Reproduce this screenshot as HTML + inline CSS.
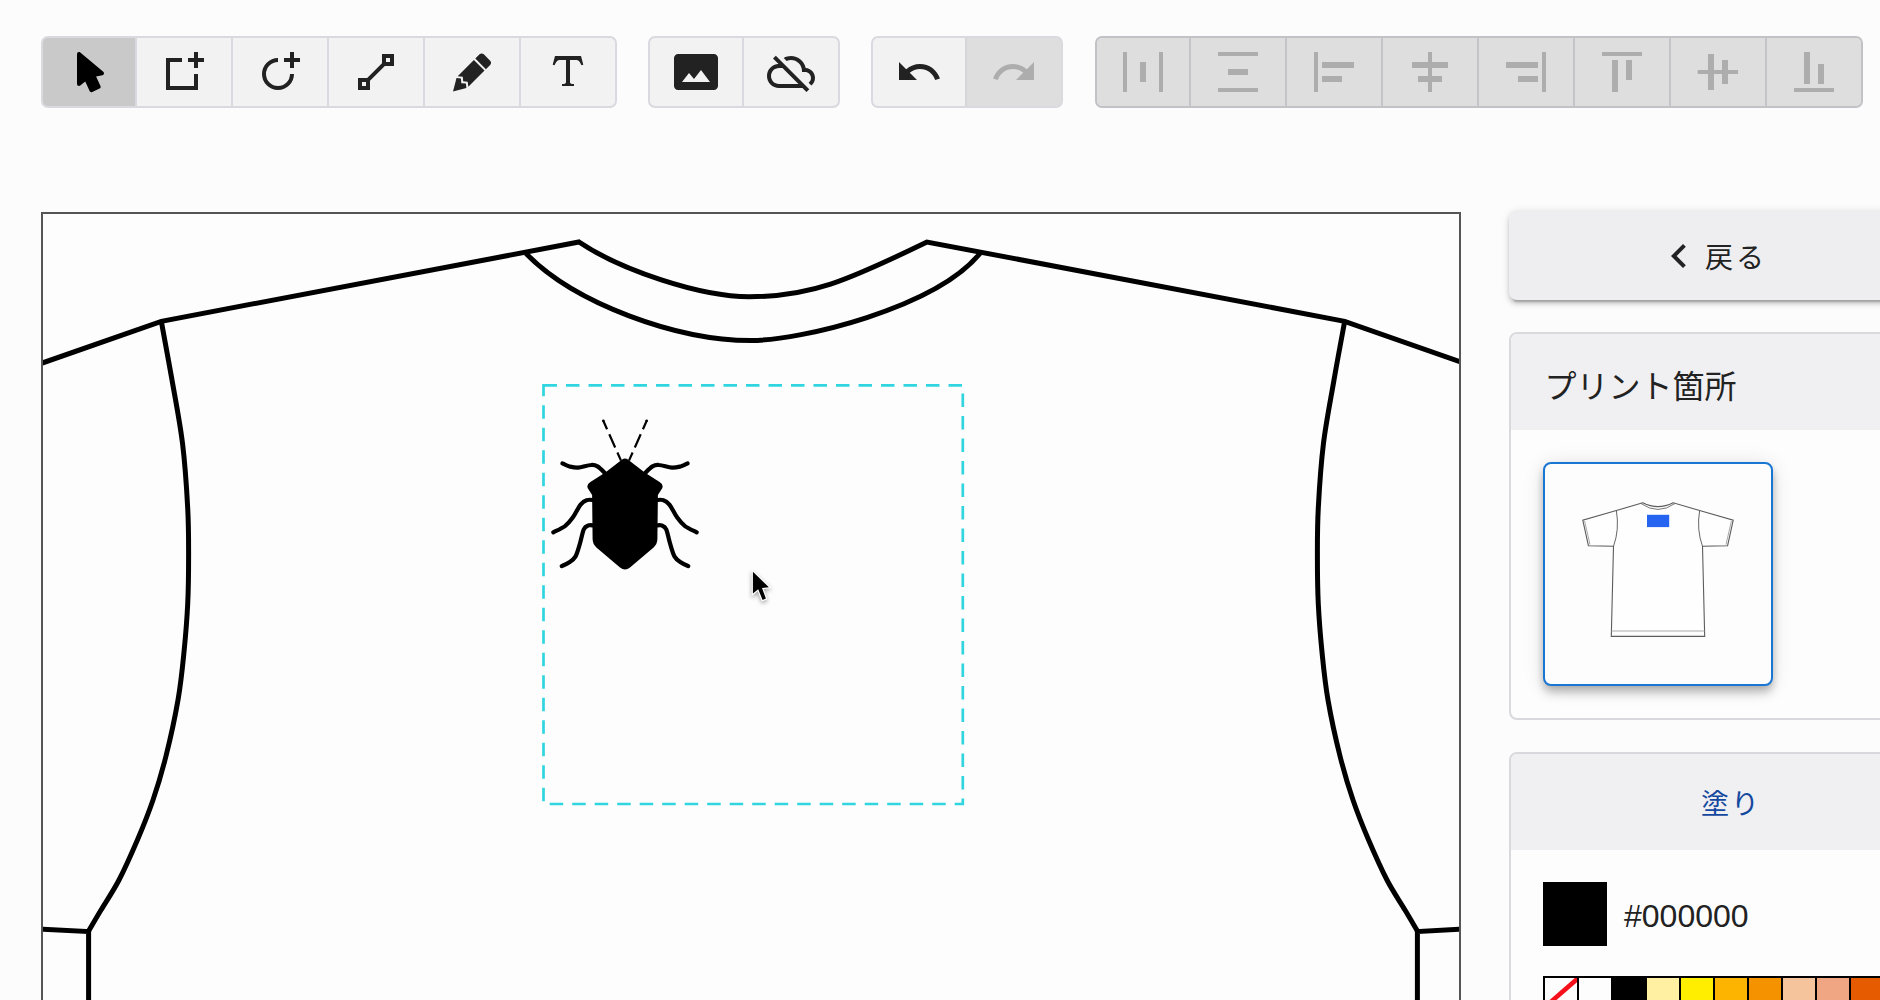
<!DOCTYPE html>
<html lang="ja">
<head>
<meta charset="utf-8">
<title>Editor</title>
<style>
*{box-sizing:border-box;margin:0;padding:0}
html,body{width:1880px;height:1000px;overflow:hidden;background:#fcfcfd;font-family:"Liberation Sans","Noto Sans CJK JP",sans-serif;color:#222}
.abs{position:absolute}
.grp{position:absolute;top:36px;height:72px;display:flex;border-radius:7px;overflow:hidden;border:2px solid #d9d9df;background:#d9d9df}
.btn{width:96px;height:68px;background:#f2f2f2;border-left:2px solid #d9d9df;position:relative;flex:0 0 auto}
.btn:first-child{border-left:none;width:92px}
.btn.act{background:#c9c9c9}
.btn.dis{background:#dedede;border-left-color:#c4c4c8}
.grp.dis{border-color:#c2c2c6;background:#dedede}
.btn svg{position:absolute;left:50%;top:50%;width:48px;height:48px;margin:-24px 0 0 -24px;fill:#222}
.btn.act svg{fill:#000}
.btn.dis svg{fill:#adadad}
#canvas{position:absolute;left:41px;top:212px;width:1420px;height:800px;border:2px solid #555;background:#fdfdfd;overflow:hidden}
.card{position:absolute;left:1509px;width:420px;border:2px solid #d9d9dd;border-radius:8px;background:#fdfdfd;overflow:hidden}
.card .hd{background:#f0f0f2;height:96px;position:relative}
#g3 .btn.dis{border-left-color:#d6d6da}
</style>
</head>
<body>
<!-- toolbar -->
<div class="grp" id="g1" style="left:41px;width:576px"><div class="btn act"><svg viewBox="0 0 24 24"><path d="M13.64,21.97C13.14,22.21 12.54,22 12.31,21.5L10.13,16.76L7.62,18.78C7.45,18.92 7.24,19 7,19A1,1 0 0,1 6,18V3A1,1 0 0,1 7,2C7.24,2 7.47,2.09 7.64,2.23L7.65,2.22L19.14,11.86C19.57,12.22 19.62,12.85 19.27,13.27C19.12,13.45 18.91,13.57 18.7,13.61L15.54,14.23L17.74,18.96C18,19.46 17.76,20.05 17.26,20.28L13.64,21.97Z"/></svg></div><div class="btn "><svg viewBox="0 0 24 24"><path d="M19,5H22V7H19V10H17V7H14V5H17V2H19V5M17,19V13H19V21H3V5H11V7H5V19H17Z"/></svg></div><div class="btn "><svg viewBox="0 0 24 24"><path d="M11,19A6,6 0 0,0 17,13H19A8,8 0 0,1 11,21A8,8 0 0,1 3,13A8,8 0 0,1 11,5V7A6,6 0 0,0 5,13A6,6 0 0,0 11,19M19,5H22V7H19V10H17V7H14V5H17V2H19V5Z"/></svg></div><div class="btn "><svg viewBox="0 0 24 24"><path d="M15,3V7.59L7.59,15H3V21H9V16.42L16.42,9H21V3M17,5H19V7H17M5,17H7V19H5"/></svg></div><div class="btn "><svg viewBox="0 0 24 24"><path d="M16.84,2.73C16.45,2.73 16.07,2.88 15.77,3.17L13.65,5.29L18.95,10.6L21.07,8.5C21.67,7.89 21.67,6.94 21.07,6.36L17.9,3.17C17.6,2.88 17.22,2.73 16.84,2.73M12.94,6L4.84,14.11L7.4,14.39L7.58,16.68L9.86,16.85L10.15,19.41L18.25,11.3M4.25,15.04L2.5,21.73L9.2,19.94L8.96,17.78L6.65,17.61L6.47,15.29"/></svg></div><div class="btn "><svg viewBox="0 0 24 24"><path d="M18.5,4L19.66,8.35L18.7,8.61C18.25,7.74 17.79,6.87 17.26,6.43C16.73,6 16.11,6 15.5,6H13V16.5C13,17 13,17.5 13.33,17.75C13.67,18 14.33,18 15,18V19H9V18C9.67,18 10.33,18 10.67,17.75C11,17.5 11,17 11,16.5V6H8.5C7.89,6 7.27,6 6.74,6.43C6.21,6.87 5.75,7.74 5.3,8.61L4.34,8.35L5.5,4H18.5Z"/></svg></div></div>
<div class="grp" id="g2" style="left:648px;width:192px"><div class="btn "><svg viewBox="0 0 24 24"><path d="M21 3H3C2 3 1 4 1 5v14c0 1.1.9 2 2 2h18c1 0 2-1 2-2V5c0-1-1-2-2-2zM5 17l3.5-4.5 2.5 3.01L14.5 11l4.5 6H5z"/></svg></div><div class="btn "><svg viewBox="0 0 24 24"><path d="M24 15c0-2.64-2.05-4.78-4.65-4.96C18.67 6.59 15.64 4 12 4c-1.33 0-2.57.36-3.65.97l1.49 1.49C10.51 6.17 11.23 6 12 6c3.04 0 5.5 2.46 5.5 5.5v.5H19c1.66 0 3 1.34 3 3 0 .99-.48 1.85-1.21 2.4l1.41 1.41c1.09-.92 1.8-2.27 1.8-3.81zM4.41 3.86L3 5.27l2.77 2.77h-.42C2.34 8.36 0 10.91 0 14c0 3.310 2.69 6 6 6h11.73l2 2 1.41-1.41L4.41 3.86zM6 18c-2.21 0-4-1.79-4-4s1.79-4 4-4h1.73l8 8H6z"/></svg></div></div>
<div class="grp" id="g3" style="left:871px;width:192px"><div class="btn "><svg viewBox="0 0 24 24"><path d="M12.5 8c-2.65 0-5.05.99-6.9 2.6L2 7v9h9l-3.62-3.62c1.39-1.16 3.16-1.88 5.12-1.88 3.54 0 6.55 2.31 7.6 5.5l2.37-.78C21.08 11.03 17.15 8 12.5 8z"/></svg></div><div class="btn dis"><svg viewBox="0 0 24 24"><path d="M18.4 10.6C16.55 8.99 14.15 8 11.5 8c-4.65 0-8.58 3.03-9.96 7.22L3.9 16c1.05-3.19 4.05-5.5 7.6-5.5 1.95 0 3.73.72 5.12 1.88L13 16h9V7l-3.6 3.6z"/></svg></div></div>
<div class="grp dis" id="g4" style="left:1095px;width:768px"><div class="btn dis"><svg viewBox="0 0 24 24"><path d="M4 22H2V2h2v20zM22 2h-2v20h2V2zm-8.5 5h-3v10h3V7z"/></svg></div><div class="btn dis"><svg viewBox="0 0 24 24"><path d="M22 2v2H2V2h20zM7 10.5v3h10v-3H7zM2 20v2h20v-2H2z"/></svg></div><div class="btn dis"><svg viewBox="0 0 24 24"><path d="M4 22H2V2h2v20zM22 7H6v3h16V7zm-6 7H6v3h10v-3z"/></svg></div><div class="btn dis"><svg viewBox="0 0 24 24"><path d="M11 2h2v5h8v3h-8v4h5v3h-5v5h-2v-5H6v-3h5v-4H3V7h8V2z"/></svg></div><div class="btn dis"><svg viewBox="0 0 24 24"><path d="M20 2h2v20h-2V2zM2 10h16V7H2v3zm6 7h10v-3H8v3z"/></svg></div><div class="btn dis"><svg viewBox="0 0 24 24"><path d="M22 2v2H2V2h20zM7 22h3V6H7v16zm7-6h3V6h-3v10z"/></svg></div><div class="btn dis"><svg viewBox="0 0 24 24"><path d="M22 11h-5V6h-3v5h-4V3H7v8H1.84v2H7v8h3v-8h4v5h3v-5h5z"/></svg></div><div class="btn dis"><svg viewBox="0 0 24 24"><path d="M22 22H2v-2h20v2zM10 2H7v16h3V2zm7 6h-3v10h3V8z"/></svg></div></div>

<!-- canvas -->
<div id="canvas">
<svg id="shirt" class="abs" style="left:-2px;top:-2px" width="1420" height="800" viewBox="41 212 1420 800" fill="none" stroke="#000" stroke-width="5" stroke-linejoin="miter" stroke-linecap="butt">
  <!-- shoulders / sleeves top -->
    <!-- collar outer -->
  <path d="M40 363.8L161.3 321.3L579 242C620.8 270.1 700 296.7 749.5 296.7C810 296.7 846 281.4 927 242L1344.7 321.3L1466 363.8"/>
  <!-- collar inner -->
  <path d="M526 253.5C574.8 303.7 677 340.5 751 340.5C800 340.5 934.8 308.3 980 253.5"/>
  <!-- armholes -->
  <path d="M161.3 321.3C163.1 331.1 168.4 359.6 172.0 380.0C175.6 400.4 180.0 422.7 182.6 444.0C185.2 465.3 186.7 489.3 187.7 508.0C188.7 526.7 188.6 540.0 188.6 556.0C188.6 572.0 188.5 588.0 187.7 604.0C186.9 620.0 185.6 636.0 184.0 652.0C182.4 668.0 181.0 682.7 178.0 700.0C175.0 717.3 170.2 739.3 166.0 756.0C161.8 772.7 157.8 786.0 153.0 800.0C148.2 814.0 143.1 826.7 137.4 840.0C131.7 853.3 125.1 868.3 119.0 880.0C112.9 891.7 106.1 901.5 101.0 910.0C95.9 918.5 90.7 927.5 88.6 931.0"/>
  <path d="M1344.7 321.3C1342.9 331.1 1337.5 359.6 1334.0 380.0C1330.5 400.4 1326.0 422.7 1323.4 444.0C1320.8 465.3 1319.3 489.3 1318.3 508.0C1317.3 526.7 1317.4 540.0 1317.4 556.0C1317.4 572.0 1317.5 588.0 1318.3 604.0C1319.1 620.0 1320.4 636.0 1322.0 652.0C1323.6 668.0 1325.0 682.7 1328.0 700.0C1331.0 717.3 1335.8 739.3 1340.0 756.0C1344.2 772.7 1348.2 786.0 1353.0 800.0C1357.8 814.0 1362.9 826.7 1368.6 840.0C1374.3 853.3 1380.9 868.3 1387.0 880.0C1393.1 891.7 1399.9 901.5 1405.0 910.0C1410.1 918.5 1415.3 927.5 1417.4 931.0"/>
  <!-- sleeve hems + side seams -->
  <path d="M40 929L88.6 931.5V1020"/>
  <path d="M1466 929L1417.4 931.5V1020"/>
  <!-- print area -->
  <rect x="543.5" y="385.4" width="419.3" height="418.6" stroke="#30d5e0" stroke-width="2.7" stroke-dasharray="13.5 9"/>
  <!-- bug -->
  <g stroke="#000" stroke-width="4.2" stroke-linecap="round" fill="none">
    <path d="M645.4 472.8C646.5 471.7 650.2 467.6 652.5 466.3C654.8 465.0 655.8 464.7 659.0 465.0C662.3 465.2 668.3 467.3 672.0 467.6C675.7 467.8 678.5 466.9 681.1 466.3C683.7 465.6 686.5 463.9 687.6 463.4"/><path d="M604.6 472.8C603.5 471.7 599.8 467.6 597.5 466.3C595.2 465.0 594.2 464.7 591.0 465.0C587.7 465.2 581.7 467.3 578.0 467.6C574.3 467.8 571.5 466.9 568.9 466.3C566.3 465.6 563.5 463.9 562.4 463.4"/>
    <path d="M656.4 500.1C657.5 500.1 660.7 499.3 662.9 500.1C665.1 500.8 667.0 501.7 669.4 504.6C671.8 507.5 674.6 514.0 677.2 517.6C679.8 521.2 681.8 523.6 685.0 526.1C688.3 528.5 694.8 531.3 696.7 532.3"/><path d="M593.6 500.1C592.5 500.1 589.3 499.3 587.1 500.1C584.9 500.8 583.0 501.7 580.6 504.6C578.2 507.5 575.4 514.0 572.8 517.6C570.2 521.2 568.2 523.6 565.0 526.1C561.7 528.5 555.2 531.3 553.3 532.3"/>
    <path d="M656.4 525.4C657.3 525.4 660.0 524.8 661.6 525.4C663.2 526.1 664.8 526.3 666.2 529.3C667.6 532.4 668.7 539.1 670.1 543.6C671.5 548.2 672.8 553.5 674.6 556.6C676.5 559.8 678.8 560.9 681.1 562.5C683.4 564.1 687.1 565.5 688.3 566.1"/><path d="M593.6 525.4C592.7 525.4 590.0 524.8 588.4 525.4C586.8 526.1 585.2 526.3 583.8 529.3C582.4 532.4 581.3 539.1 579.9 543.6C578.5 548.2 577.2 553.5 575.4 556.6C573.5 559.8 571.2 560.9 568.9 562.5C566.6 564.1 562.9 565.5 561.7 566.1"/>
  </g>
  <g stroke="#000" stroke-width="2.2" stroke-dasharray="14.5 5.5" stroke-dashoffset="5" stroke-linecap="butt">
    <path d="M603.2 420.5L621 460.6"/>
    <path d="M646.8 420.5L629 460.6"/>
  </g>
  <circle cx="603.3" cy="420.8" r="1.3" fill="#000" stroke="none"/>
  <circle cx="646.7" cy="420.8" r="1.3" fill="#000" stroke="none"/>
  <path fill="#000" stroke="none" d="M625 458.4Q626.6 458.4 628.2 459.8L644.7 472.6L659.6 482Q663.8 484.6 662.2 488.2L657.9 495L657.4 539Q657.4 544 653.6 547.4L630 567.6Q625 571.6 620 567.6L596.4 547.4Q592.6 544 592.6 539L592.1 495L587.8 488.2Q586.2 484.6 590.4 482L605.3 472.6L621.8 459.8Q623.4 458.4 625 458.4Z"/>
  <!-- mouse cursor -->
  <g style="filter:drop-shadow(0 2px 2px rgba(0,0,0,.35))">
    <path d="M752.9 571.8V593.6L758.2 589.2L762.6 599.9L765.9 598.5L762 588L768.9 587.2Z" fill="#000" stroke="#fff" stroke-width="2.4" stroke-linejoin="miter" paint-order="stroke"/>
  </g>
</svg>
</div>

<!-- right panel -->
<div id="back" class="abs" style="left:1509px;top:210px;width:420px;height:90px;background:#eeeef0;border-radius:8px;box-shadow:0 6px 2px -4px rgba(0,0,0,.2),0 4px 4px rgba(0,0,0,.14),0 2px 10px rgba(0,0,0,.12)">
  <svg class="abs" style="left:146px;top:22px" width="48" height="48" viewBox="0 0 24 24" fill="#222"><path d="M15.41 7.41L14 6l-6 6 6 6 1.41-1.41L10.83 12z"/></svg>
  <div class="abs" style="left:196px;top:3px;height:90px;line-height:92px;font-size:28px;letter-spacing:3px;white-space:nowrap;color:#222">戻る</div>
</div>

<div class="card" id="c1" style="top:332px;height:388px">
  <div class="hd"><div class="abs" style="left:33.5px;top:28.5px;font-size:32px;line-height:48px;white-space:nowrap;color:#222">プリント箇所</div></div>
</div>
<!-- thumbnail -->
<div class="abs" id="thumb" style="left:1543px;top:462px;width:230px;height:224px;border:2.5px solid #1976d2;border-radius:8px;background:#fdfdfd;box-shadow:0 4px 8px -2px rgba(0,0,0,.2),0 8px 10px 0 rgba(0,0,0,.14),0 2px 20px 0 rgba(0,0,0,.12)"></div>
<svg class="abs" style="left:1543px;top:462px" width="230" height="224" viewBox="1543 462 230 224" fill="none" stroke="#5c5c5c" stroke-width="1.1">
  <path d="M1642.8 502.8L1616.4 510.5L1582.8 520.1L1588.4 545.7L1613.5 546.3L1611.3 636.4H1704.7L1702.5 546.3L1727.6 545.7L1733.2 520.1L1699.6 510.5L1673.2 502.8Q1658 510.5 1642.8 502.8Z" fill="#fefefe"/>
  <path d="M1640.8 503.4Q1658 515.5 1675.2 503.4" stroke="#777" stroke-width="1"/>
  <path d="M1616.4 510.5Q1619.5 530 1613.5 546.3M1699.6 510.5Q1696.5 530 1702.5 546.3" stroke="#666" stroke-width="1"/>
  <path d="M1584.6 521L1590 544.6M1731.4 521L1726 544.6" stroke="#aaa" stroke-width="1"/>
  <path d="M1611.5 631H1704.5" stroke="#aaa" stroke-width="1"/>
  <rect x="1647" y="514.8" width="22.2" height="12.3" fill="#2464f0" stroke="none"/>
</svg>

<div class="card" id="c2" style="top:752px;height:300px">
  <div class="hd" style="height:96px"><div class="abs" style="left:190px;top:26.5px;font-size:28px;line-height:48px;letter-spacing:2px;white-space:nowrap;color:#15489f">塗り</div></div>
</div>
<div class="abs" style="left:1543px;top:882px;width:64px;height:64px;background:#000"></div>
<div class="abs" style="left:1624px;top:894px;font-size:32px;line-height:44px;color:#222;white-space:nowrap">#000000</div>
<div class="abs" id="sw" style="left:1543px;top:976px;height:40px;display:flex;white-space:nowrap">
  <div class="sw" style="background:#fdfdfd"><svg width="32" height="36" viewBox="0 0 32 36" style="display:block"><path d="M-3 31.6L35 -1.5" stroke="#f5101a" stroke-width="4.6"/></svg></div>
  <div class="sw" style="background:#fdfdfd"></div>
  <div class="sw" style="background:#000"></div>
  <div class="sw" style="background:#fff0a2"></div>
  <div class="sw" style="background:#ffee00"></div>
  <div class="sw" style="background:#fdb400"></div>
  <div class="sw" style="background:#f59200"></div>
  <div class="sw" style="background:#f5c49c"></div>
  <div class="sw" style="background:#f0a683"></div>
  <div class="sw" style="background:#e65a00"></div>
  <div class="sw" style="background:#e60012"></div>
</div>
<style>
.sw{width:36px;height:40px;border:2px solid #000;margin-right:-2px;flex:0 0 auto;overflow:hidden}
</style>
</body>
</html>
